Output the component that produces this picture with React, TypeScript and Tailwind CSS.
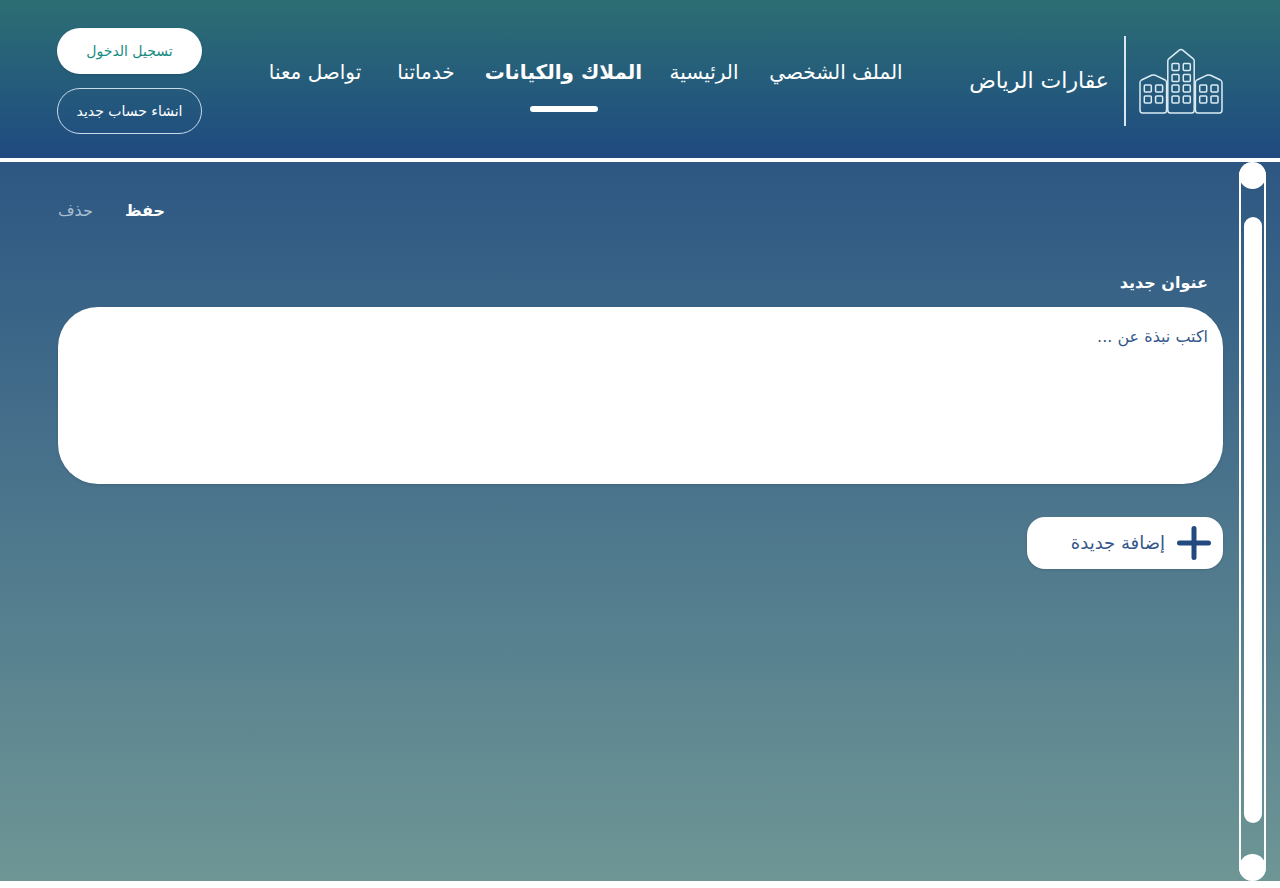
import React from "react";

const links = [
  { label: "الملف الشخصي", width: "w-[137px]" },
  { label: "الرئيسية", width: "w-[67px]" },
  { label: "الملاك والكيانات", width: "w-[154px]", active: true },
  { label: "خدماتنا", width: "w-[61px]" },
  { label: "تواصل معنا", width: "w-[101px]" },
];

function Windows({ x, ys }: { x: number; ys: number[] }) {
  return (
    <>
      {ys.map((y) => (
        <g key={y}>
          <rect x={x} y={y} width="7" height="7" rx="1" />
          <rect x={x + 11.3} y={y} width="7" height="7" rx="1" />
        </g>
      ))}
    </>
  );
}

function Logo() {
  return (
    <svg viewBox="0 0 84 66" className="h-[66px] w-[84px] shrink-0" fill="none" stroke="#dcecf5" strokeWidth="1.5" strokeLinejoin="round" aria-hidden="true">
      <path d="M28.8 13Q28.8 11.500 30 10.600L40 2.400Q42 .8 44 2.400L54 10.600Q55.200 11.500 55.200 13V62Q55.200 65 52.700 65H31.300Q28.800 65 28.800 62Z" />
      <path d="M1 34.500Q1 33 2.500 32L12.500 27.300Q14.500 26.500 16.500 27.300L26.200 32Q27.600 33 27.600 34.500V62Q27.600 65 25 65H3.500Q1 65 1 62Z" />
      <path d="M56.400 34.500Q56.400 33 57.800 32L67.500 27.300Q69.500 26.500 71.500 27.300L81.500 32Q83 33 83 34.500V62Q83 65 80.500 65H59Q56.400 65 56.400 62Z" />
      <Windows x={33} ys={[15.5, 26.5, 37, 48]} />
      <Windows x={5.3} ys={[37, 48]} />
      <Windows x={60.7} ys={[37, 48]} />
    </svg>
  );
}

export default function App() {
  return (
    <div dir="rtl" lang="ar" className="min-h-screen bg-white pb-[7px] font-['DejaVu_Sans',sans-serif] text-white">
      <div className="flex min-h-[calc(100vh-7px)] flex-col">
        <header className="flex items-start justify-between border-b-4 border-white bg-linear-to-b from-[#2d6e73] to-[#204a80] px-[57px] pt-7 pb-6">
          <a href="#home" className="mt-2 flex shrink-0 items-center">
            <Logo />
            <span className="mr-[13px] h-[90px] w-0.5 bg-[#d9e8f0]" />
            <span className="mr-[15px] w-[142px] text-[22px] leading-8 whitespace-nowrap">عقارات الرياض</span>
          </a>
          <nav className="mt-7 flex shrink-0 gap-[30px]">
            {links.map((l) => (
              <a
                key={l.label}
                href="#section"
                aria-current={l.active ? "page" : undefined}
                className={`flex flex-col items-center text-xl leading-8 whitespace-nowrap ${l.width} ${l.active ? "font-bold" : ""}`}
              >
                <span>{l.label}</span>
                {l.active && <span className="mt-[18px] h-1.5 w-[68px] rounded-full bg-white" />}
              </a>
            ))}
          </nav>
          <div className="flex w-[145px] shrink-0 flex-col gap-[14px] text-sm">
            <button className="h-[46px] rounded-full bg-white text-[#168b80] shadow-sm">تسجيل الدخول</button>
            <button className="h-[46px] rounded-full border border-[#c9dbe9]">انشاء حساب جديد</button>
          </div>
        </header>
        <div className="flex flex-1 bg-linear-to-b from-[#2d5782] to-[#6e9695] pr-3.5">
          <div className="flex w-[27px] shrink-0 flex-col items-center justify-between rounded-full border-x-2 border-white" aria-hidden="true">
            <span className="size-[27px] shrink-0 rounded-full bg-white" />
            <span className="mt-7 mb-[31px] w-[18px] flex-1 rounded-full bg-white" />
            <span className="size-[27px] shrink-0 rounded-full bg-white" />
          </div>
          <main className="flex flex-1 flex-col items-start pt-[35px] pr-4 pl-[58px]">
            <div className="flex gap-8 self-end text-base leading-7">
              <button className="font-bold">حفظ</button>
              <button className="text-[#a9bfd2]">حذف</button>
            </div>
            <label htmlFor="about" className="mt-11 pr-[15px] text-base leading-7 font-bold">عنوان جديد</label>
            <textarea
              id="about"
              placeholder="اكتب نبذة عن ..."
              className="mt-2.5 h-[177px] w-full resize-none rounded-[40px] bg-white px-[15px] py-4 text-base leading-7 text-[#244a80] shadow-sm outline-none placeholder:text-[#355789]"
            />
            <button className="mt-[33px] flex h-[52px] w-[196px] items-center gap-3 rounded-[18px] bg-white pr-3 text-lg text-[#355789] shadow-sm">
              <svg viewBox="0 0 34 34" className="size-[34px]" stroke="#204a80" strokeWidth="5" strokeLinecap="round" aria-hidden="true">
                <path d="M17 2.500V31.500M2.500 17H31.500" />
              </svg>
              إضافة جديدة
            </button>
          </main>
        </div>
      </div>
    </div>
  );
}
